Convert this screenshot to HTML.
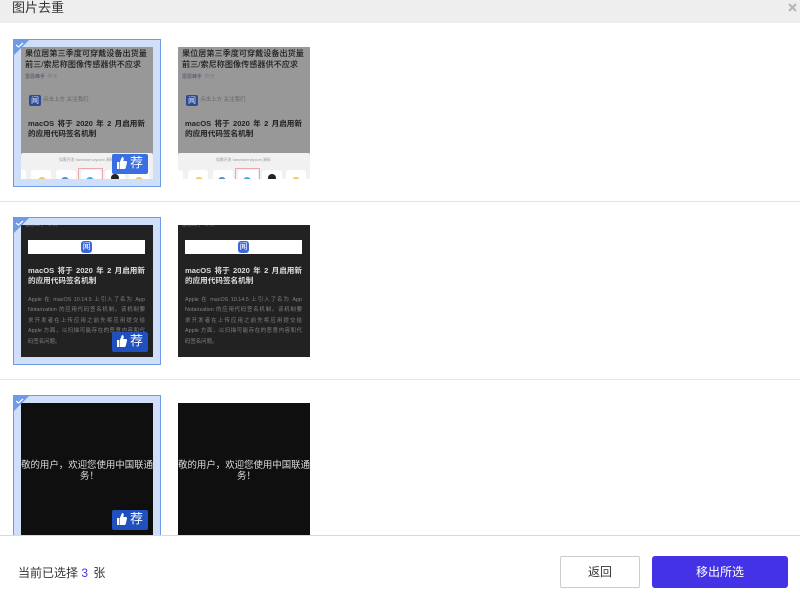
<!DOCTYPE html>
<html lang="zh">
<head>
<meta charset="utf-8">
<title>图片去重</title>
<style>
html,body{margin:0;padding:0;width:800px;height:612px;overflow:hidden;background:#fff;font-family:"Liberation Sans","Noto Sans CJK SC",sans-serif;}
div,span{position:absolute;white-space:nowrap;}
.hd{left:0;top:0;width:800px;height:23px;background:#eee;}
.ttl{left:12px;top:-1px;font-size:13px;line-height:18px;color:#333;}
.sep{left:0;width:800px;height:1px;background:#e4e4e4;}
.card{left:13px;width:146px;height:146px;background:#d0dff9;border:1px solid #6e9ae6;}
.tri{left:13px;width:17px;height:17px;}
.im{width:132px;height:132px;overflow:hidden;}
.g{background:#989898;}
.d{background:#222;}
.b{background:#0f0f0f;}
.bl{left:0;top:0;width:132px;height:132px;overflow:hidden;filter:blur(.35px);}
.t{line-height:10px;}
.badge{left:112px;width:36px;height:20px;background:#2050bd;border-radius:2px;color:#fff;}
.badge span{left:18px;top:0;font-size:13px;line-height:18px;}
.badge svg{position:absolute;left:5px;top:3px;}
.ft{left:0;top:535px;width:800px;height:77px;background:#fff;border-top:1px solid #d9d9d9;box-sizing:border-box;}
.bt{top:556px;height:32px;box-sizing:border-box;text-align:center;font-size:12px;line-height:32px;}
.ic{top:123px;width:20px;height:12px;background:#fff;border-radius:3px;}
.dot{top:130px;width:8px;height:8px;border-radius:50%;}
.logo{background:#2f4a94;border-radius:2px;color:#dfe6f7;text-align:center;font-size:8px;line-height:11px;}
.j{position:static;display:block;white-space:normal;text-align:justify;text-align-last:justify;height:10.4px;}
.body{left:7px;top:70px;width:117px;font-size:5.4px;line-height:10.4px;color:#808080;}
</style>
</head>
<body>
<div class="hd"></div>
<div class="ttl">图片去重</div>
<svg style="position:absolute;left:788px;top:3px" width="9" height="9" viewBox="0 0 9 9"><path d="M1 1L8 8M8 1L1 8" stroke="#b4b4b4" stroke-width="2"/></svg>

<!-- row 1 -->
<div class="card" style="top:39px"></div>
<div class="im g" style="left:21px;top:47px"><div class="bl">
  <div class="t" style="left:4px;top:1px;font-size:8.15px;line-height:11px;color:#1c1c1c;font-weight:500">果位居第三季度可穿戴设备出货量<br>前三/索尼称图像传感器供不应求</div>
  <div style="left:4px;top:27px;font-size:5px;line-height:6px;color:#4a4a66">雷恩峰手&nbsp;&nbsp;<span style="position:static;color:#7c7c7c">昨天</span></div>
  <div class="logo" style="left:8px;top:48px;width:12px;height:11px">闻</div>
  <div style="left:22px;top:50px;font-size:5.5px;line-height:7px;color:#666">点击上方 关注我们</div>
  <div class="t" style="left:7px;top:72px;font-size:7.6px;font-weight:bold;color:#222;word-spacing:1.2px">macOS 将于 2020 年 2 月启用新<br>的应用代码签名机制</div>
  <div style="left:0;top:106px;width:132px;height:26px;background:#f1f1f1;border-radius:2px 2px 0 0"></div>
  <div style="left:38px;top:110px;font-size:3.9px;line-height:5px;color:#999">如需开发 harvester.wycom 源码</div>
  <div class="ic" style="left:-15px"></div>
  <div class="ic" style="left:10px"></div><div class="dot" style="left:17px;background:#e9c96a"></div>
  <div class="ic" style="left:35px"></div><div class="dot" style="left:40px;background:#4d8fd0"></div>
  <div class="ic" style="left:60px"></div><div class="dot" style="left:65px;background:#45aee0"></div>
  <div style="left:57px;top:121px;width:25px;height:14px;box-sizing:border-box;border:1px solid #e6a9ac"></div>
  <div class="ic" style="left:84px"></div><div class="dot" style="left:90px;top:127px;background:#222"></div>
  <div class="ic" style="left:108px"></div><div class="dot" style="left:114px;background:#e9c96a"></div>
</div></div>
<div class="im g" style="left:178px;top:47px"><div class="bl">
  <div class="t" style="left:4px;top:1px;font-size:8.15px;line-height:11px;color:#1c1c1c;font-weight:500">果位居第三季度可穿戴设备出货量<br>前三/索尼称图像传感器供不应求</div>
  <div style="left:4px;top:27px;font-size:5px;line-height:6px;color:#4a4a66">雷恩峰手&nbsp;&nbsp;<span style="position:static;color:#7c7c7c">昨天</span></div>
  <div class="logo" style="left:8px;top:48px;width:12px;height:11px">闻</div>
  <div style="left:22px;top:50px;font-size:5.5px;line-height:7px;color:#666">点击上方 关注我们</div>
  <div class="t" style="left:7px;top:72px;font-size:7.6px;font-weight:bold;color:#222;word-spacing:1.2px">macOS 将于 2020 年 2 月启用新<br>的应用代码签名机制</div>
  <div style="left:0;top:106px;width:132px;height:26px;background:#f1f1f1;border-radius:2px 2px 0 0"></div>
  <div style="left:38px;top:110px;font-size:3.9px;line-height:5px;color:#999">如需开发 harvester.wycom 源码</div>
  <div class="ic" style="left:-15px"></div>
  <div class="ic" style="left:10px"></div><div class="dot" style="left:17px;background:#e9c96a"></div>
  <div class="ic" style="left:35px"></div><div class="dot" style="left:40px;background:#4d8fd0"></div>
  <div class="ic" style="left:60px"></div><div class="dot" style="left:65px;background:#45aee0"></div>
  <div style="left:57px;top:121px;width:25px;height:14px;box-sizing:border-box;border:1px solid #e6a9ac"></div>
  <div class="ic" style="left:84px"></div><div class="dot" style="left:90px;top:127px;background:#222"></div>
  <div class="ic" style="left:108px"></div><div class="dot" style="left:114px;background:#e9c96a"></div>
</div></div>
<svg class="tri" style="position:absolute;top:39px" width="17" height="17" viewBox="0 0 17 17"><path d="M0 0H17L0 17Z" fill="#6e9ae6"/><path d="M3 6L5.5 8L10 4" fill="none" stroke="#fff" stroke-width="1.2"/></svg>
<div class="badge" style="top:154px;background:#3a6fe2"><svg width="10" height="12" viewBox="0 0 10 12"><path d="M0 5H2.3V12H0ZM2.9 5L5 0C6.4 0 7 1.2 6.7 2.4L6.3 4H9C9.8 4 10.2 4.8 10 5.6L8.7 11C8.5 11.6 8.1 12 7.5 12H2.9Z" fill="#fff"/></svg><span>荐</span></div>

<div class="sep" style="top:201px"></div>

<!-- row 2 -->
<div class="card" style="top:217px"></div>
<div class="im d" style="left:21px;top:225px"><div class="bl">
  <div style="left:4px;top:-3px;font-size:5px;line-height:6px;color:#777">雷恩峰手&nbsp;&nbsp;昨天</div>
  <div style="left:7px;top:15px;width:117px;height:14px;background:#fff"></div>
  <div class="logo" style="left:60px;top:16px;width:11px;height:12px;background:#3d68dc;line-height:12px;color:#fff;border-radius:3px">闻</div>
  <div class="t" style="left:7px;top:41px;font-size:7.6px;font-weight:bold;color:#ddd;word-spacing:1.2px">macOS 将于 2020 年 2 月启用新<br>的应用代码签名机制</div>
  <div class="body"><div class="j">Apple 在 macOS 10.14.5 上引入了名为 App</div><div class="j">Notarization 的应用代码签名机制。该机制要</div><div class="j">求开发者在上传应用之前先将应用提交给</div><div class="j">Apple 方面，以扫描可能存在的恶意内容和代</div><div style="position:static">码签名问题。</div></div>
</div></div>
<div class="im d" style="left:178px;top:225px"><div class="bl">
  <div style="left:4px;top:-3px;font-size:5px;line-height:6px;color:#777">雷恩峰手&nbsp;&nbsp;昨天</div>
  <div style="left:7px;top:15px;width:117px;height:14px;background:#fff"></div>
  <div class="logo" style="left:60px;top:16px;width:11px;height:12px;background:#3d68dc;line-height:12px;color:#fff;border-radius:3px">闻</div>
  <div class="t" style="left:7px;top:41px;font-size:7.6px;font-weight:bold;color:#ddd;word-spacing:1.2px">macOS 将于 2020 年 2 月启用新<br>的应用代码签名机制</div>
  <div class="body"><div class="j">Apple 在 macOS 10.14.5 上引入了名为 App</div><div class="j">Notarization 的应用代码签名机制。该机制要</div><div class="j">求开发者在上传应用之前先将应用提交给</div><div class="j">Apple 方面，以扫描可能存在的恶意内容和代</div><div style="position:static">码签名问题。</div></div>
</div></div>
<svg class="tri" style="position:absolute;top:217px" width="17" height="17" viewBox="0 0 17 17"><path d="M0 0H17L0 17Z" fill="#6e9ae6"/><path d="M3 6L5.5 8L10 4" fill="none" stroke="#fff" stroke-width="1.2"/></svg>
<div class="badge" style="top:332px"><svg width="10" height="12" viewBox="0 0 10 12"><path d="M0 5H2.3V12H0ZM2.9 5L5 0C6.4 0 7 1.2 6.7 2.4L6.3 4H9C9.8 4 10.2 4.8 10 5.6L8.7 11C8.5 11.6 8.1 12 7.5 12H2.9Z" fill="#fff"/></svg><span>荐</span></div>

<div class="sep" style="top:379px"></div>

<!-- row 3 -->
<div class="card" style="top:395px"></div>
<div class="im b" style="left:21px;top:403px">
  <div style="right:0;top:56px;font-size:9.43px;line-height:11px;color:#ddd">尊敬的用户，欢迎您使用中国联通</div>
  <div style="left:59px;top:67px;font-size:9.43px;line-height:11px;color:#ddd">务！</div>
</div>
<div class="im b" style="left:178px;top:403px">
  <div style="right:0;top:56px;font-size:9.43px;line-height:11px;color:#ddd">尊敬的用户，欢迎您使用中国联通</div>
  <div style="left:59px;top:67px;font-size:9.43px;line-height:11px;color:#ddd">务！</div>
</div>
<svg class="tri" style="position:absolute;top:395px" width="17" height="17" viewBox="0 0 17 17"><path d="M0 0H17L0 17Z" fill="#6e9ae6"/><path d="M3 6L5.5 8L10 4" fill="none" stroke="#fff" stroke-width="1.2"/></svg>
<div class="badge" style="top:510px"><svg width="10" height="12" viewBox="0 0 10 12"><path d="M0 5H2.3V12H0ZM2.9 5L5 0C6.4 0 7 1.2 6.7 2.4L6.3 4H9C9.8 4 10.2 4.8 10 5.6L8.7 11C8.5 11.6 8.1 12 7.5 12H2.9Z" fill="#fff"/></svg><span>荐</span></div>

<!-- footer -->
<div class="ft"></div>
<div style="left:18px;top:565px;font-size:12px;line-height:17px;color:#333">当前已选择 <span style="position:static;color:#4433dd;margin-right:2px">3</span> 张</div>
<div class="bt" style="left:560px;width:80px;background:#fff;border:1px solid #ccc;border-radius:2px;color:#333;line-height:30px">返回</div>
<div class="bt" style="left:652px;width:136px;background:#4433e6;border-radius:3px;color:#fff">移出所选</div>
</body>
</html>
